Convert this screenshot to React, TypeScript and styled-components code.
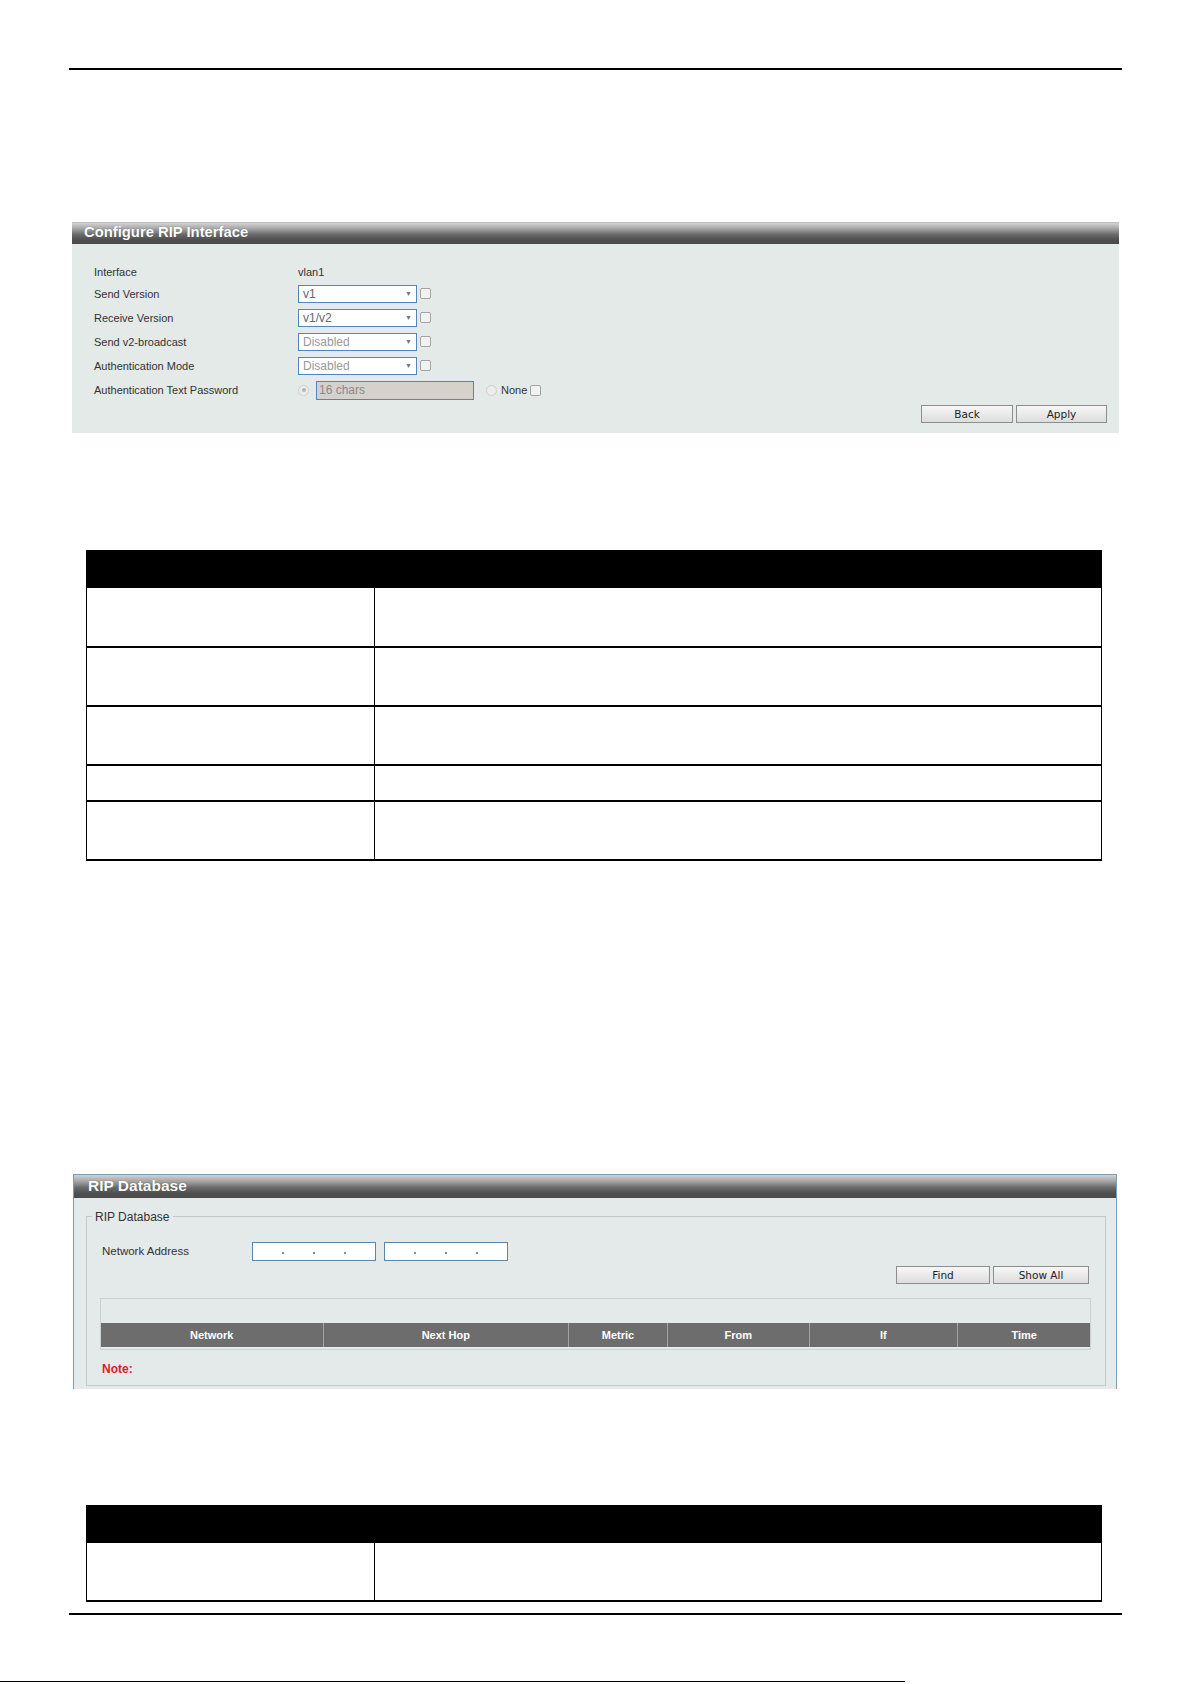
import React from 'react';
import styled, { createGlobalStyle } from 'styled-components';

const GlobalStyle = createGlobalStyle`
  html, body {
    margin: 0;
    padding: 0;
    background: #ffffff;
  }
  body {
    font-family: "Liberation Sans", Arial, sans-serif;
    color: #333;
  }
`;

type FormRow = { label: string; value: string; disabled?: boolean };

const selectRows: FormRow[] = [
  { label: 'Send Version', value: 'v1' },
  { label: 'Receive Version', value: 'v1/v2' },
  { label: 'Send v2-broadcast', value: 'Disabled', disabled: true },
  { label: 'Authentication Mode', value: 'Disabled', disabled: true },
];

// row heights of the parameter table under the config panel
const interfaceDocRows = [59, 59, 59, 36, 59];

const dbColumns = [
  { title: 'Network', width: 222 },
  { title: 'Next Hop', width: 246 },
  { title: 'Metric', width: 99 },
  { title: 'From', width: 142 },
  { title: 'If', width: 149 },
  { title: 'Time', width: 133 },
];

const IpField = () => (
  <IpInput>
    <IpSegment />
    <IpDot />
    <IpSegment />
    <IpDot />
    <IpSegment />
    <IpDot />
    <IpSegment />
  </IpInput>
);

const DocColumns = () => (
  <colgroup>
    <col style={{ width: 288 }} />
    <col />
  </colgroup>
);

const App = () => {
  return (
    <Page>
      <GlobalStyle />
      <Rule />

      <ConfigPanel>
        <PanelHeader>Configure RIP Interface</PanelHeader>
        <ConfigBody>
          <FormGrid>
            <Label>Interface</Label>
            <PlainValue>vlan1</PlainValue>
            {selectRows.map((row) => (
              <React.Fragment key={row.label}>
                <Label>{row.label}</Label>
                <Cell>
                  <SelectBox $disabled={row.disabled}>
                    <span>{row.value}</span>
                    <Arrow>▼</Arrow>
                  </SelectBox>
                  <Check />
                </Cell>
              </React.Fragment>
            ))}
            <Label>Authentication Text Password</Label>
            <Cell>
              <Radio $checked />
              <PasswordInput>16 chars</PasswordInput>
              <Radio $gap />
              <NoneText>None</NoneText>
              <Check />
            </Cell>
          </FormGrid>
          <ButtonRow>
            <Button $w={92}>Back</Button>
            <Button $w={91}>Apply</Button>
          </ButtonRow>
        </ConfigBody>
      </ConfigPanel>

      <DocTable $top={117}>
        <DocColumns />
        <thead>
          <tr>
            <HeadCell colSpan={2} />
          </tr>
        </thead>
        <tbody>
          {interfaceDocRows.map((h, i) => (
            <tr key={i} style={{ height: h }}>
              <NameCell />
              <DescCell />
            </tr>
          ))}
        </tbody>
      </DocTable>

      <DbPanel>
        <DbHeader>RIP Database</DbHeader>
        <DbFieldset>
          <DbLegend>RIP Database</DbLegend>
          <AddressRow>
            <AddressLabel>Network Address</AddressLabel>
            <IpField />
            <IpField />
          </AddressRow>
          <FindRow>
            <Button $w={94}>Find</Button>
            <Button $w={96}>Show All</Button>
          </FindRow>
          <ResultBox>
            <ResultSpacer />
            <ResultHead>
              {dbColumns.map((c) => (
                <ResultHeadCell key={c.title} style={{ width: c.width }}>
                  {c.title}
                </ResultHeadCell>
              ))}
            </ResultHead>
          </ResultBox>
          <Note>Note:</Note>
        </DbFieldset>
      </DbPanel>

      <DocTable $top={116}>
        <DocColumns />
        <thead>
          <tr>
            <HeadCell colSpan={2} />
          </tr>
        </thead>
        <tbody>
          <tr style={{ height: 59 }}>
            <NameCell />
            <DescCell />
          </tr>
        </tbody>
      </DocTable>

      <Rule $top={11} />
      <FootLine />
    </Page>
  );
};

export default App;

// ── Styled Components ──

const Page = styled.div`
  width: 1192px;
  min-height: 1684px;
  display: flex;
  flex-direction: column;
  overflow: hidden;
`;

const Rule = styled.div<{ $top?: number }>`
  margin: ${({ $top }) => $top ?? 68}px 0 0 69px;
  width: 1053px;
  height: 2px;
  background: #000;
  flex-shrink: 0;
`;

const FootLine = styled.div`
  margin-top: 66px;
  width: 905px;
  height: 1px;
  background: #000;
  flex-shrink: 0;
`;

const headerGradient = `linear-gradient(
  to bottom,
  #d2d2d2 0%,
  #a9a9a9 25%,
  #6a6a6a 55%,
  #4f4f4f 80%,
  #4b4b4b 100%
)`;

const ConfigPanel = styled.section`
  margin: 152px 0 0 72px;
  width: 1047px;
  background: #e3eae8;
`;

const PanelHeader = styled.div`
  height: 22px;
  box-sizing: border-box;
  border-top: 1px solid #bdbdbd;
  background: ${headerGradient};
  color: #fff;
  font-weight: 700;
  font-size: 14.8px;
  line-height: 19px;
  padding-left: 12px;
  text-shadow: 0 0 1px rgba(0, 0, 0, 0.4);
`;

const ConfigBody = styled.div`
  padding: 21px 12px 10px 22px;
`;

const FormGrid = styled.div`
  display: grid;
  grid-template-columns: 204px auto;
  grid-template-rows: 14px repeat(4, 19px) 20px;
  row-gap: 5px;
  align-items: center;
`;

const Label = styled.div`
  font-size: 11px;
  color: #333;
  white-space: nowrap;
`;

const PlainValue = styled.div`
  font-size: 11px;
  color: #333;
`;

const Cell = styled.div`
  display: flex;
  align-items: center;
`;

const SelectBox = styled.div<{ $disabled?: boolean }>`
  box-sizing: border-box;
  width: 119px;
  height: 18px;
  border: 1px solid #4f86bf;
  background: #fff;
  display: flex;
  align-items: center;
  justify-content: space-between;
  padding: 0 4px 0 4px;
  font-size: 12px;
  color: ${({ $disabled }) => ($disabled ? '#999' : '#666')};
`;

const Arrow = styled.span`
  font-size: 7px;
  color: #777;
`;

const Check = styled.span`
  box-sizing: border-box;
  width: 11px;
  height: 11px;
  margin-left: 3px;
  border: 1px solid #a3a3a3;
  border-radius: 2px;
  background: #f2f2f2;
`;

const Radio = styled.span<{ $checked?: boolean; $gap?: boolean }>`
  box-sizing: border-box;
  width: 11px;
  height: 11px;
  border-radius: 50%;
  border: 1px solid #cfcfcf;
  background: #ededed;
  margin-left: ${({ $gap }) => ($gap ? 12 : 0)}px;
  margin-right: ${({ $gap }) => ($gap ? 4 : 7)}px;
  display: inline-flex;
  align-items: center;
  justify-content: center;

  &::after {
    content: '';
    display: ${({ $checked }) => ($checked ? 'block' : 'none')};
    width: 4px;
    height: 4px;
    border-radius: 50%;
    background: #b4b4b4;
  }
`;

const PasswordInput = styled.div`
  box-sizing: border-box;
  width: 158px;
  height: 19px;
  margin-top: 1px;
  border: 1px solid #4f86bf;
  background: #d6d1cb;
  color: #8a8a8a;
  font-size: 12px;
  line-height: 17px;
  padding-left: 2px;
`;

const NoneText = styled.span`
  font-size: 11px;
  color: #333;
`;

const ButtonRow = styled.div`
  display: flex;
  justify-content: flex-end;
  gap: 3px;
  margin-top: 5px;
`;

const Button = styled.button<{ $w: number }>`
  box-sizing: border-box;
  width: ${({ $w }) => $w}px;
  height: 18px;
  padding: 0;
  border: 1px solid #8d8d8d;
  border-radius: 0;
  background: linear-gradient(to bottom, #f7f7f7, #dddddd);
  font-family: "DejaVu Sans", Tahoma, sans-serif;
  font-size: 10.5px;
  color: #222;
  cursor: pointer;
`;

const DocTable = styled.table<{ $top: number }>`
  margin: ${({ $top }) => $top}px 0 0 86px;
  width: 1016px;
  border-collapse: collapse;
  table-layout: fixed;
  flex-shrink: 0;
`;

const HeadCell = styled.th`
  height: 36px;
  padding: 0;
  background: #000;
  border: 1px solid #000;
`;

const NameCell = styled.td`
  padding: 0;
  border-left: 1px solid #000;
  border-right: 1px solid #000;
  border-bottom: 2px solid #000;
`;

const DescCell = styled.td`
  padding: 0;
  border-right: 1px solid #000;
  border-bottom: 2px solid #000;
`;

const DbPanel = styled.section`
  margin: 313px 0 0 73px;
  width: 1044px;
  height: 215px;
  box-sizing: border-box;
  border: 1px solid #7f9bb1;
  border-bottom: none;
  background: #e4e9ea;
  overflow: hidden;
  flex-shrink: 0;
`;

const DbHeader = styled.div`
  height: 23px;
  background: ${headerGradient};
  color: #fff;
  font-weight: 700;
  font-size: 15.5px;
  line-height: 21px;
  padding-left: 14px;
  text-shadow: 0 0 1px rgba(0, 0, 0, 0.4);
`;

const DbFieldset = styled.fieldset`
  margin: 12px 10px 0 12px;
  padding: 0 14px 9px 13px;
  border: 1px solid #c3c9cb;
  min-width: 0;
`;

const DbLegend = styled.legend`
  margin-left: -8px;
  padding: 0 3px;
  font-size: 12px;
  color: #333;
`;

const AddressRow = styled.div`
  display: flex;
  align-items: center;
  gap: 8px;
  margin-top: 18px;
  padding-left: 2px;
`;

const AddressLabel = styled.span`
  width: 142px;
  font-size: 11.5px;
  color: #333;
`;

const IpInput = styled.div`
  box-sizing: border-box;
  width: 124px;
  height: 19px;
  border: 1px solid #5b86ab;
  background: #fff;
  display: flex;
  align-items: center;
`;

const IpSegment = styled.span`
  width: 29px;
`;

const IpDot = styled.span`
  width: 2px;
  height: 2px;
  margin: 3px 0 0 0;
  background: #8a8a8a;
`;

const FindRow = styled.div`
  display: flex;
  justify-content: flex-end;
  gap: 3px;
  margin-top: 5px;
  padding-right: 2px;
`;

const ResultBox = styled.div`
  margin-top: 14px;
  border: 1px solid #cbd0d2;
  padding-bottom: 2px;
`;

const ResultSpacer = styled.div`
  height: 24px;
`;

const ResultHead = styled.div`
  display: flex;
  height: 24px;
  background: #6d6d6d;
`;

const ResultHeadCell = styled.div`
  box-sizing: border-box;
  display: flex;
  align-items: center;
  justify-content: center;
  border-left: 1px solid #a2a2a2;
  color: #fff;
  font-weight: 700;
  font-size: 11px;

  &:first-child {
    border-left: none;
  }
`;

const Note = styled.div`
  margin-top: 12px;
  padding-left: 2px;
  color: #d9231d;
  font-weight: 700;
  font-size: 12px;
`;
